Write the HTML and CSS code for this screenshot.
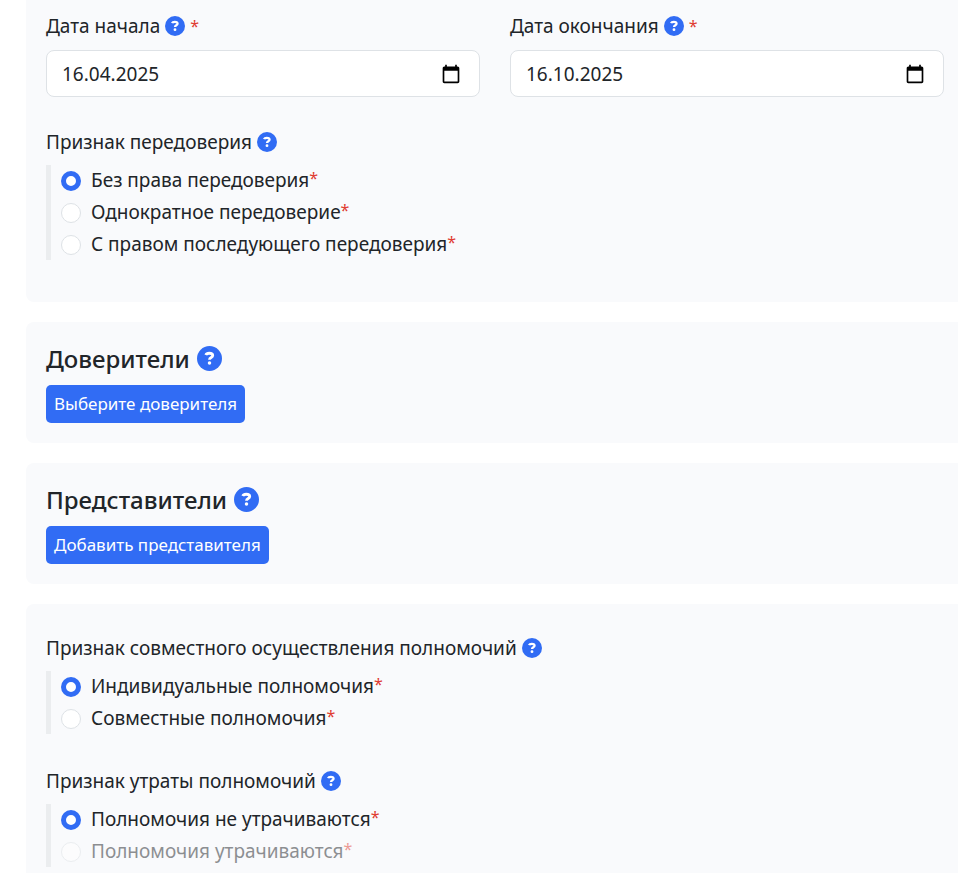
FILE: index.html
```html
<!DOCTYPE html>
<html lang="ru">
<head>
<meta charset="utf-8">
<title>Доверенность</title>
<link rel="stylesheet" href="styles.css">
</head>
<body>
<svg class="sprite" aria-hidden="true">
  <symbol id="help" viewBox="0 0 512 512"><circle cx="256" cy="256" r="256"/><path d="M180 184c10-26 34-36 70-36c44 0 72 16 72 48c0 42-66 38-66 84" fill="none" stroke="#fff" stroke-width="58"/><circle cx="256" cy="350" r="36" fill="#fff"/></symbol>
  <symbol id="calendar" viewBox="0 0 24 24"><path d="M20 3h-1V1h-2v2H7V1H5v2H4c-1.100 0-2 .9-2 2v16c0 1.100.9 2 2 2h16c1.100 0 2-.9 2-2V5c0-1.100-.9-2-2-2zm0 18H4V8h16v13z"/></symbol>
</svg>
<main class="form">
  <section class="card card-terms">
    <div class="dates">
      <div class="field">
        <div class="caption"><label for="start">Дата начала</label><svg class="help"><use href="#help"/></svg><span class="required">*</span></div>
        <div class="date-box"><input id="start" type="text" value="16.04.2025"><button type="button" class="picker" aria-label="Календарь"><svg><use href="#calendar"/></svg></button></div>
      </div>
      <div class="field">
        <div class="caption"><label for="end">Дата окончания</label><svg class="help"><use href="#help"/></svg><span class="required">*</span></div>
        <div class="date-box"><input id="end" type="text" value="16.10.2025"><button type="button" class="picker" aria-label="Календарь"><svg><use href="#calendar"/></svg></button></div>
      </div>
    </div>
    <div class="group" role="radiogroup" aria-labelledby="g1">
      <div class="caption" id="g1">Признак передоверия<svg class="help"><use href="#help"/></svg></div>
      <div class="options">
        <label class="option"><input type="radio" name="transfer" checked><span>Без права передоверия<span class="required">*</span></span></label>
        <label class="option"><input type="radio" name="transfer"><span>Однократное передоверие<span class="required">*</span></span></label>
        <label class="option"><input type="radio" name="transfer"><span>С правом последующего передоверия<span class="required">*</span></span></label>
      </div>
    </div>
  </section>
  <section class="card">
    <h2>Доверители<svg class="help"><use href="#help"/></svg></h2>
    <button type="button" class="action">Выберите доверителя</button>
  </section>
  <section class="card">
    <h2>Представители<svg class="help"><use href="#help"/></svg></h2>
    <button type="button" class="action">Добавить представителя</button>
  </section>
  <section class="card card-powers">
    <div class="group" role="radiogroup" aria-labelledby="g2">
      <div class="caption" id="g2">Признак совместного осуществления полномочий<svg class="help"><use href="#help"/></svg></div>
      <div class="options">
        <label class="option"><input type="radio" name="joint" checked><span>Индивидуальные полномочия<span class="required">*</span></span></label>
        <label class="option"><input type="radio" name="joint"><span>Совместные полномочия<span class="required">*</span></span></label>
      </div>
    </div>
    <div class="group" role="radiogroup" aria-labelledby="g3">
      <div class="caption" id="g3">Признак утраты полномочий<svg class="help"><use href="#help"/></svg></div>
      <div class="options">
        <label class="option"><input type="radio" name="loss" checked><span>Полномочия не утрачиваются<span class="required">*</span></span></label>
        <label class="option disabled"><input type="radio" name="loss" disabled><span>Полномочия утрачиваются<span class="required">*</span></span></label>
      </div>
    </div>
  </section>
</main>
</body>
</html>
```
FILE: styles.css
```css
* { box-sizing: border-box; }
body {
  margin: 0;
  background: #fff;
  color: #212529;
  font: 19px/30px "Segoe UI", "Noto Sans", "Open Sans", sans-serif;
}
.sprite { display: none; }
.form {
  display: flex;
  flex-direction: column;
  gap: 20px;
  padding-left: 26px;
}
.card {
  padding: 20px 14px 20px 20px;
  background: #f9fafc;
  border-radius: 8px 0 0 8px;
}
.card-terms {
  padding-top: 11px;
  padding-bottom: 42px;
  border-top-left-radius: 0;
}
.card-powers {
  padding-top: 29px;
  padding-bottom: 6px;
  border-bottom-left-radius: 0;
}
.dates {
  display: grid;
  grid-template-columns: 1fr 1fr;
  gap: 30px;
  margin-bottom: 30px;
}
.caption {
  display: flex;
  align-items: center;
  gap: 5px;
  margin-bottom: 8px;
}
.dates .caption { margin-bottom: 9px; }
.help {
  flex: none;
  width: 20px;
  height: 20px;
  fill: #316cf4;
}
.required { color: #e03c31; font-size: 16px; }
.date-box {
  display: flex;
  align-items: center;
  height: 47px;
  padding: 0 18px 0 15px;
  background: #fff;
  border: 1px solid #dee2e6;
  border-radius: 8px;
}
.date-box input {
  flex: 1;
  min-width: 0;
  padding: 0;
  border: 0;
  outline: 0;
  background: none;
  color: inherit;
  font: inherit;
}
.picker {
  display: flex;
  padding: 0;
  border: 0;
  background: none;
}
.picker svg { width: 20px; height: 20px; }
.group + .group { margin-top: 32px; }
.options {
  display: grid;
  gap: 1px;
  padding-left: 10px;
  border-left: 5px solid #ebedef;
}
.option {
  display: flex;
  align-items: center;
  gap: 10px;
  height: 31px;
  line-height: 31px;
}
.option .required { line-height: 1; vertical-align: 3px; }
.option input {
  appearance: none;
  flex: none;
  width: 20px;
  height: 20px;
  margin: 0;
  border: 1px solid #dee2e6;
  border-radius: 50%;
  background: #fff;
}
.option input:checked { border: 5px solid #316cf4; }
.disabled { opacity: .5; }
h2 {
  display: flex;
  align-items: center;
  gap: 7px;
  margin: 0 0 10px;
  font-size: 24px;
  line-height: 33px;
  font-weight: 500;
}
h2 .help { width: 25px; height: 25px; }
.action {
  display: block;
  height: 38px;
  padding: 0 8px;
  border: 0;
  border-radius: 5px;
  background: #316cf4;
  color: #fff;
  font: 17px/38px "Segoe UI", "Noto Sans", "Open Sans", sans-serif;
}
```
